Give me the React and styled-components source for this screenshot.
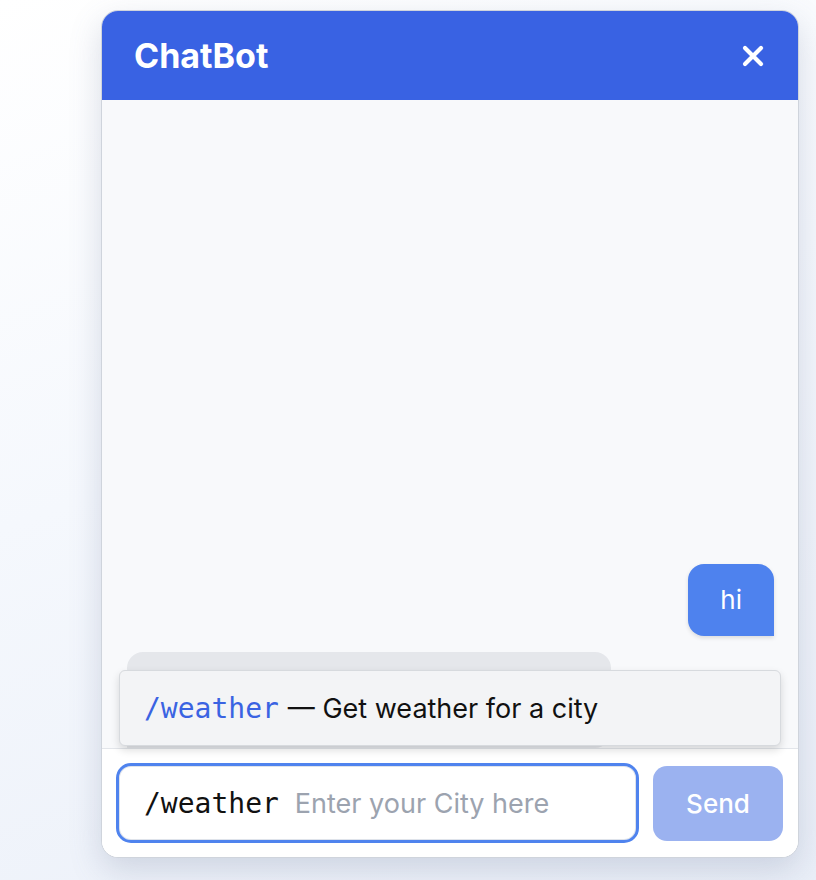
import React from 'react';
import styled, { createGlobalStyle } from 'styled-components';

const GlobalStyle = createGlobalStyle`
  html, body {
    margin: 0;
    padding: 0;
  }
  body {
    font-family: Inter, "Noto Sans", "Liberation Sans", sans-serif;
    background: linear-gradient(160deg, #ffffff 0%, #f5f8fd 45%, #eaeff8 100%);
    min-height: 880px;
  }
`;

const Page = styled.div`
  height: 880px;
  display: flex;
  justify-content: flex-end;
  align-items: flex-start;
  padding: 10px 17px 0 0;
  box-sizing: border-box;
`;

const ChatWindow = styled.div`
  width: 698px;
  height: 848px;
  box-sizing: border-box;
  display: flex;
  flex-direction: column;
  border: 1px solid #cfd4dc;
  border-radius: 17px;
  overflow: hidden;
  background: #ffffff;
  box-shadow: 0 12px 32px rgba(90, 105, 140, 0.22);
`;

const Header = styled.div`
  height: 89px;
  flex-shrink: 0;
  background: #3962e3;
  display: flex;
  align-items: center;
  justify-content: space-between;
  padding: 0 33px 0 32px;
`;

const Title = styled.h1`
  margin: 0;
  color: #ffffff;
  font-size: 34px;
  font-weight: 700;
  letter-spacing: 0;
`;

const CloseButton = styled.button`
  background: transparent;
  border: none;
  padding: 0;
  width: 24px;
  height: 24px;
  display: flex;
  align-items: center;
  justify-content: center;
  cursor: pointer;
`;

const Messages = styled.div`
  flex: 1;
  background: #f8f9fb;
  display: flex;
  flex-direction: column;
  justify-content: flex-end;
  gap: 16px;
  padding: 0 24px 0 24px;
  overflow: hidden;
`;

const Bubble = styled.div`
  align-self: ${p => (p.$mine ? 'flex-end' : 'flex-start')};
  background: ${p => (p.$mine ? '#4e82ee' : '#e5e7eb')};
  color: ${p => (p.$mine ? '#ffffff' : '#111827')};
  font-size: 26px;
  padding: 0 32px;
  height: 72px;
  line-height: 72px;
  border-radius: ${p => (p.$mine ? '16px 16px 0 16px' : '16px 16px 16px 0')};
  box-shadow: ${p => (p.$mine ? '0 2px 4px rgba(0,0,0,0.12)' : 'none')};
`;

const PendingBubble = styled(Bubble)`
  width: 420px;
  height: 96px;
  margin-left: 1px;
`;

const Footer = styled.div`
  position: relative;
  flex-shrink: 0;
  border-top: 1px solid #e2e5ea;
  background: #ffffff;
  display: flex;
  align-items: center;
  gap: 14px;
  padding: 14px 15px 14px 14px;
`;

const Suggestions = styled.div`
  position: absolute;
  left: 17px;
  right: 17px;
  bottom: calc(100% + 3px);
  height: 76px;
  box-sizing: border-box;
  background: #f3f4f6;
  border: 1px solid #d7dade;
  border-radius: 6px;
  box-shadow: 0 4px 8px rgba(0, 0, 0, 0.14);
  display: flex;
  align-items: center;
  padding: 0 24px;
`;

const Command = styled.span`
  font-family: "DejaVu Sans Mono", "Liberation Mono", monospace;
  font-size: 28px;
  color: #3a63e2;
`;

const Description = styled.span`
  font-size: 27px;
  color: #111111;
  margin-left: 9px;
`;

const InputBox = styled.label`
  flex: 1;
  min-width: 0;
  height: 80px;
  box-sizing: border-box;
  border: 3px solid #4f83ee;
  border-radius: 15px;
  display: flex;
  align-items: center;
  padding: 0 24px 0 25px;
  background: #ffffff;
  box-shadow: inset 0 0 0 1px #dfe3ea;
`;

const Prefix = styled.span`
  font-family: "DejaVu Sans Mono", "Liberation Mono", monospace;
  font-size: 28px;
  color: #111111;
  margin-right: 16px;
`;

const TextInput = styled.input`
  flex: 1;
  width: 0;
  min-width: 0;
  border: none;
  outline: none;
  background: transparent;
  font-family: Inter, "Noto Sans", "Liberation Sans", sans-serif;
  font-size: 27px;
  color: #111827;
  padding: 0;
  &::placeholder {
    color: #9ca3af;
  }
`;

const SendButton = styled.button`
  flex-shrink: 0;
  width: 130px;
  height: 75px;
  padding: 0;
  border: none;
  border-radius: 14px;
  background: #9bb2f0;
  color: #ffffff;
  font-family: Inter, "Noto Sans", "Liberation Sans", sans-serif;
  font-size: 26px;
  font-weight: 500;
`;

export default function App() {
  return (
    <Page>
      <GlobalStyle />
      <ChatWindow>
        <Header>
          <Title>ChatBot</Title>
          <CloseButton aria-label="Close">
            <svg width="22" height="22" viewBox="0 0 22 22">
              <path d="M3 3 L19 19 M19 3 L3 19" stroke="#ffffff" strokeWidth="4.2" strokeLinecap="round" />
            </svg>
          </CloseButton>
        </Header>
        <Messages>
          <Bubble $mine>hi</Bubble>
          <PendingBubble />
        </Messages>
        <Footer>
          <Suggestions>
            <Command>/weather</Command>
            <Description>— Get weather for a city</Description>
          </Suggestions>
          <InputBox>
            <Prefix>/weather</Prefix>
            <TextInput placeholder="Enter your City here" />
          </InputBox>
          <SendButton disabled>Send</SendButton>
        </Footer>
      </ChatWindow>
    </Page>
  );
}
